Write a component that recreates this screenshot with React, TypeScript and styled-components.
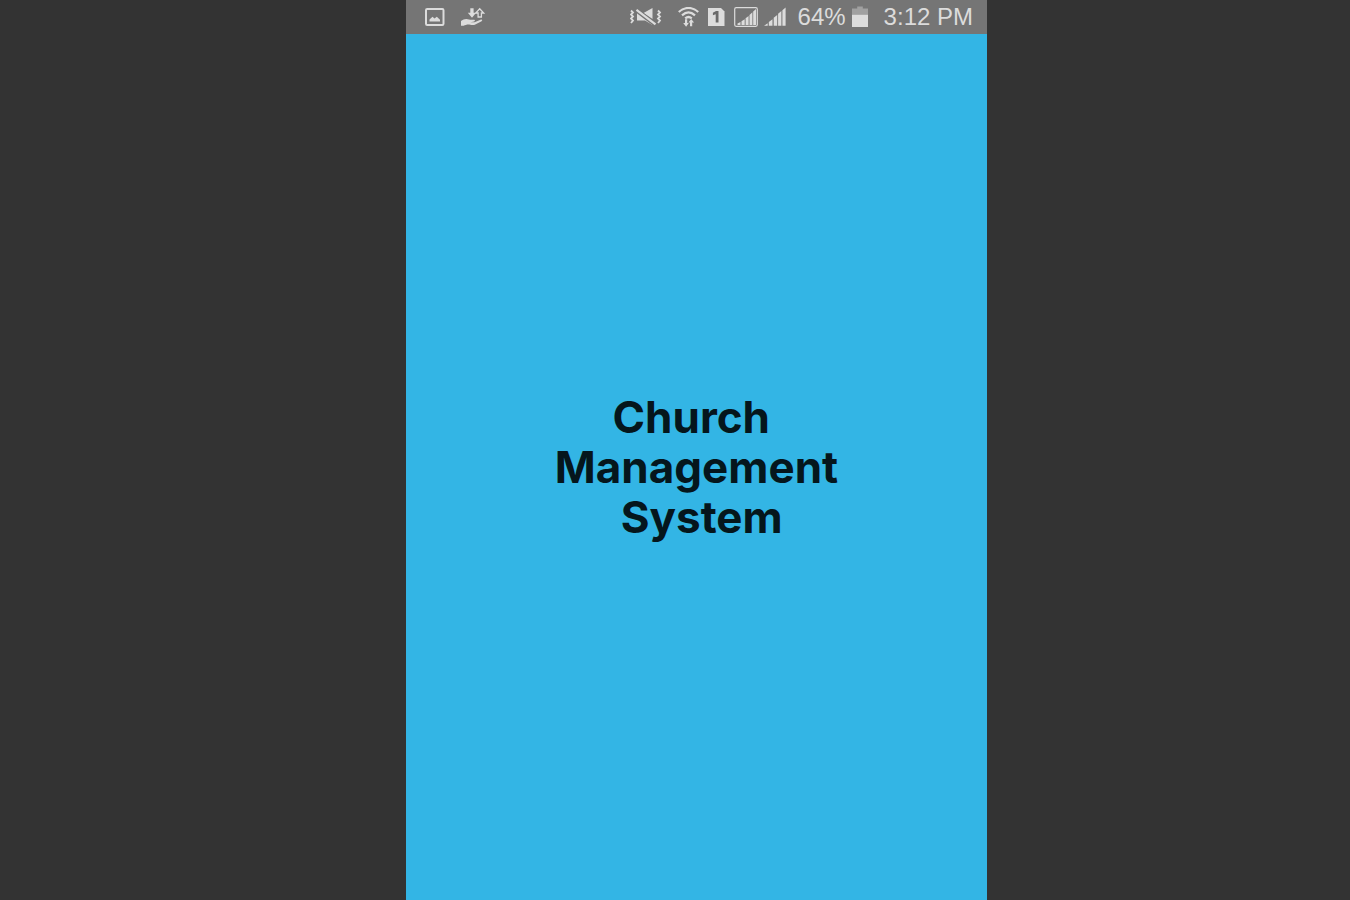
import React from "react";
import styled, { createGlobalStyle } from "styled-components";

const GlobalStyle = createGlobalStyle`
  body {
    margin: 0;
    background: #333333;
  }
`;

const Stage = styled.div`
  display: grid;
  grid-template-columns: 406fr 581fr 363fr;
  min-height: 100vh;
  background: #333333;
`;

const Screen = styled.div`
  grid-column: 2;
  display: flex;
  flex-direction: column;
  background: #33b5e5;
`;

const StatusBar = styled.header`
  display: flex;
  align-items: center;
  justify-content: space-between;
  height: 34px;
  padding: 0 14px 0 19px;
  background: #757575;
  color: #dcdcdc;
  font: 400 24px/34px "Liberation Sans", Arial, sans-serif;
  white-space: nowrap;
`;

const Group = styled.div<{ $gap: number }>`
  display: flex;
  align-items: center;
  gap: ${(p) => p.$gap}px;
`;

const Icon = styled.svg`
  display: block;
  flex: none;
  fill: currentColor;
`;

const Splash = styled.main`
  flex: 1;
  display: flex;
  align-items: center;
  justify-content: center;
`;

const Title = styled.h1`
  margin: 0;
  color: #05161c;
  font: 700 44px/50px Inter, Roboto, sans-serif;
  text-align: center;
  white-space: pre;
`;

const PictureIcon = () => (
  <Icon width="20" height="20" viewBox="0 0 20 20" aria-label="Screenshot saved">
    <rect x="1" y="2" width="17.5" height="16" rx="1.2" fill="none" stroke="currentColor" strokeWidth="2" />
    <path d="M4.500 14.500v-2l3-2.700 2 1.800 2.300-1.800 3.200 3v1.700z" />
  </Icon>
);

const TransferIcon = () => (
  <Icon width="26" height="20" viewBox="0 0 26 20" aria-label="Data sharing">
    <path d="M0 14C2.500 11.900 5.500 11.300 8 12.500c1.500.6 3.700.2 5.200.3 1 .2.900 1.400 0 1.600l-3.700.8h4l6-2.500c1.600-.6 2.400.6 1.100 1.500l-6.300 3.400c-1.500.7-3.400.6-5 .2-2.800-.6-4.700.2-6.700 1H0z" />
    <path d="M9.300 1.200h3.300v4.600h2.500L11 10.700 6.800 5.800h2.500z" />
    <path d="M18.700 1.800l4 4.200h-2.300v4h-3.300V6h-2.400z" fill="none" stroke="currentColor" strokeWidth="1.300" />
  </Icon>
);

const MuteIcon = () => (
  <Icon width="32" height="20" viewBox="0 0 32 20" aria-label="Vibrate">
    <path d="M7 5.500h4L22.500 13.500V18l-7.500-4.400H7z" />
    <path d="M13.500 6L22.500 1V12z" />
    <path d="M6.500 3.200L25 17.200" stroke="#757575" strokeWidth="4.500" />
    <path d="M6.500 2.800L25.500 17.300" stroke="currentColor" strokeWidth="2.200" />
    <path d="M1 3.500l2 2-2 2 2 2-2 2 2 2-2 2.500M28 3.500l2 2-2 2 2 2-2 2 2 2-2 2.500" fill="none" stroke="currentColor" strokeWidth="1.800" />
  </Icon>
);

const WifiIcon = () => (
  <Icon width="22" height="20" viewBox="0 0 22 20" aria-label="Wi-Fi">
    <path d="M.8 5C6.500-.4 14.500-.4 20.200 5M4 8.300c4.200-3.700 8.800-3.700 13 0M7.200 11.300c2.400-1.900 4.200-1.900 6.600 0" fill="none" stroke="currentColor" strokeWidth="2.200" />
    <path d="M7 12.300h2.200V16h1.600L8.100 19.800 5.200 16H7zM12 19.300v-3.700h-1.500l2.700-3.700 2.900 3.700h-1.900v3.700z" />
  </Icon>
);

const SimIcon = () => (
  <Icon width="18" height="20" viewBox="0 0 18 20" aria-label="SIM 1">
    <path d="M0 1h13L16.500 4.500V19H0z" />
    <path d="M8 4h2.500v11.500H7.700V7.200L4.900 8.300V5.800z" fill="#6a6a6a" />
  </Icon>
);

const BoxedSignalIcon = () => (
  <Icon width="24" height="20" viewBox="0 0 24 20" aria-label="Signal, SIM 1">
    <rect x=".7" y=".7" width="22.600" height="18.600" rx="1.500" fill="none" stroke="currentColor" strokeWidth="1.200" />
    <path d="M3.500 16.500l3-1.500V18h-3zM7.500 14.300l3.200-2V18H7.500zM11.600 11.300l3-2.400V18h-3zM15.500 8l2.900-2.700V18h-2.900zM19.200 4.500L22 2v16h-2.800z" />
  </Icon>
);

const SignalIcon = () => (
  <Icon width="22" height="20" viewBox="0 0 22 20" aria-label="Signal, SIM 2">
    <path d="M0 18.800l3.700-2.600v2.600zM4.800 14.900l3.700-2.600v6.500H4.800zM9.700 10.800l3.500-2.900v10.900H9.700zM14.100 6.800l3.300-2.900v14.900h-3.300zM18.400 3.200L21.600.5v18.300h-3.200z" />
  </Icon>
);

const BatteryIcon = () => (
  <Icon width="16" height="22" viewBox="0 0 16 22" aria-label="Battery">
    <path d="M0 2.500h5.200V.5h5.600v2H16V9H0z" fill="#a0a0a0" />
    <path d="M0 8.800h16V21H0z" />
  </Icon>
);

export default function App() {
  return (
    <>
      <GlobalStyle />
      <Stage>
        <Screen>
          <StatusBar>
            <Group $gap={16}>
              <PictureIcon />
              <TransferIcon />
            </Group>
            <Group $gap={12}>
              <Group $gap={16}>
                <MuteIcon />
                <Group $gap={8}>
                  <WifiIcon />
                  <SimIcon />
                  <Group $gap={6}>
                    <BoxedSignalIcon />
                    <SignalIcon />
                  </Group>
                </Group>
              </Group>
              <Group $gap={16}>
                <Group $gap={6}>
                  <span>64%</span>
                  <BatteryIcon />
                </Group>
                <time>3:12 PM</time>
              </Group>
            </Group>
          </StatusBar>
          <Splash>
            <Title>{"Church \nManagement\n System"}</Title>
          </Splash>
        </Screen>
      </Stage>
    </>
  );
}
